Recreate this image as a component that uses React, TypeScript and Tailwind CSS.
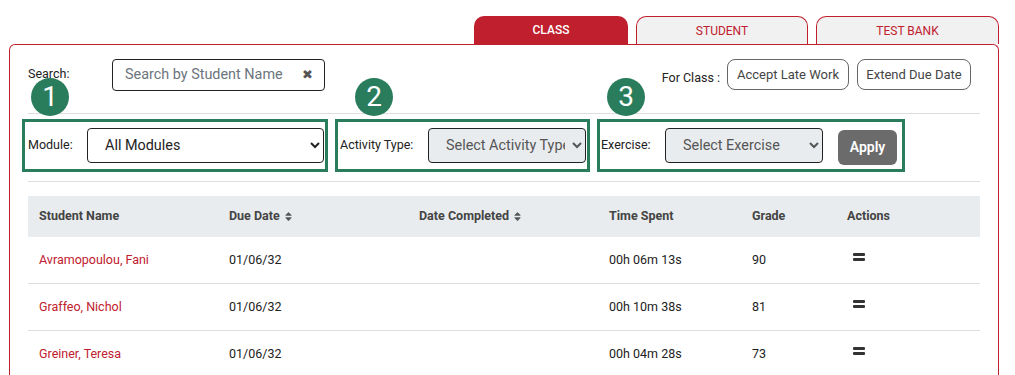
import { FaSort } from "react-icons/fa";

const RED = "text-[#c0202e]";

const rows = [
  { name: "Avramopoulou, Fani", due: "01/06/32", completed: "", time: "00h 06m 13s", grade: "90" },
  { name: "Graffeo, Nichol", due: "01/06/32", completed: "", time: "00h 10m 38s", grade: "81" },
  { name: "Greiner, Teresa", due: "01/06/32", completed: "", time: "00h 04m 28s", grade: "73" },
];

function Badge({ n, className }: { n: number; className: string }) {
  return (
    <div
      className={
        "absolute w-[38px] h-[38px] rounded-full bg-[#2a7d5c] text-white text-[28px] leading-none flex items-center justify-center z-10 " +
        className
      }
    >
      {n}
    </div>
  );
}

function Hamburger() {
  return (
    <div className="flex flex-col gap-[2px] w-[12px] -mt-[6px] ml-[6px]">
      <div className="h-[3px] bg-[#333] rounded-[1px]" />
      <div className="h-[3px] bg-[#333] rounded-[1px]" />
    </div>
  );
}

export default function App() {
  return (
    <div className="w-[1015px] h-[375px] overflow-hidden bg-white font-['Roboto',sans-serif] text-[#222]">
      <div className="pt-4 pl-[9px] pr-[16px]">
        {/* tabs */}
        <div className="flex justify-end gap-2 h-[28px]">
          <div className="w-[154px] rounded-t-[10px] bg-[#c0202e] text-white text-[12px] font-medium flex items-center justify-center">
            CLASS
          </div>
          <div className={"w-[172px] rounded-t-[10px] bg-[#f1f1f1] border border-b-0 border-[#c0202e] text-[12px] flex items-center justify-center " + RED}>
            STUDENT
          </div>
          <div className={"w-[183px] rounded-t-[10px] bg-[#f1f1f1] border border-b-0 border-[#c0202e] text-[12px] flex items-center justify-center " + RED}>
            TEST BANK
          </div>
        </div>

        {/* panel */}
        <div className="border border-b-0 border-[#c0202e] rounded-t-[6px] h-[340px] px-[18px] pt-[14px]">
          {/* search row */}
          <div className="flex items-center h-[32px]">
            <span className="w-[84px] text-[12.5px] -mt-[2px]">Search:</span>
            <div className="w-[213px] h-[32px] border border-[#222] rounded-[4px] flex items-center pl-[12px] pr-[11px]">
              <span className="flex-1 text-[14.4px] text-[#6c757d]">Search by Student Name</span>
              <span className="text-[13px] text-[#555] font-['DejaVu_Sans',sans-serif]">✖</span>
            </div>
            <div className="flex-1" />
            <span className="text-[12.5px] mt-[6px] mr-[7px]">For Class :</span>
            <button className="h-[31px] w-[122px] border border-[#666] rounded-[8px] text-[13px] text-[#444] -mt-[1px]">
              Accept Late Work
            </button>
            <button className="h-[31px] w-[114px] ml-2 mr-[9px] border border-[#666] rounded-[8px] text-[13px] text-[#444] -mt-[1px]">
              Extend Due Date
            </button>
          </div>

          <div className="mt-[22px] border-t border-[#ddd]" />

          {/* filters */}
          <div className="flex gap-[7px] -ml-[6px] mt-[5px]">
            <div className="relative w-[306px] h-[53px] border-[3px] border-[#2a7d5c] flex items-center pl-[3px] pr-[1px]">
              <Badge n={1} className="left-[6px] -top-[44px]" />
              <span className="w-[59px] text-[12.5px]">Module:</span>
              <select className="w-[237px] h-[35px] border border-[#222] rounded-[4px] bg-white text-[14.4px] pl-[13px] text-[#222]">
                <option>All Modules</option>
              </select>
            </div>
            <div className="relative w-[255px] h-[53px] border-[3px] border-[#2a7d5c] flex items-center pl-[2px] pr-[1px]">
              <Badge n={2} className="left-[17px] -top-[44px]" />
              <span className="w-[88px] text-[12.5px]">Activity Type:</span>
              <select className="w-[158px] h-[35px] border border-[#222] rounded-[4px] bg-[#e9ecef] text-[14.4px] pl-[13px] pr-[4px] text-[#555]">
                <option>Select Activity Type</option>
              </select>
            </div>
            <div className="relative w-[308px] h-[53px] border-[3px] border-[#2a7d5c] flex items-center pl-[1px]">
              <Badge n={3} className="left-[7px] -top-[44px]" />
              <span className="w-[64px] text-[12.5px]">Exercise:</span>
              <select className="w-[158px] h-[35px] border border-[#222] rounded-[4px] bg-[#e9ecef] text-[14.4px] pl-[13px] text-[#555]">
                <option>Select Exercise</option>
              </select>
              <button className="ml-[15px] mt-[4px] w-[59px] h-[35px] rounded-[6px] bg-[#6b6b6b] text-white text-[14px] font-semibold">
                Apply
              </button>
            </div>
          </div>

          <div className="mt-[9px] border-t border-[#ddd]" />

          {/* table */}
          <div className="mt-[14px] w-[952px] text-[12.5px]">
            <div className="flex items-center h-[41px] bg-[#e9ecef] px-[11px] font-bold text-[#444]">
              <div className="w-[190px]">Student Name</div>
              <div className="w-[190px] flex items-center gap-[3px]">
                Due Date <FaSort className="text-[11px] text-[#555]" />
              </div>
              <div className="w-[190px] flex items-center gap-[3px]">
                Date Completed <FaSort className="text-[11px] text-[#555]" />
              </div>
              <div className="w-[143px]">Time Spent</div>
              <div className="w-[95px]">Grade</div>
              <div className="flex-1">Actions</div>
            </div>
            {rows.map((r) => (
              <div key={r.name} className="flex items-center h-[47px] px-[11px] border-b border-[#ddd]">
                <div className={"w-[190px] " + RED}>{r.name}</div>
                <div className="w-[190px]">{r.due}</div>
                <div className="w-[190px]">{r.completed}</div>
                <div className="w-[143px]">{r.time}</div>
                <div className="w-[95px]">{r.grade}</div>
                <div className="flex-1">
                  <Hamburger />
                </div>
              </div>
            ))}
          </div>
        </div>
      </div>
    </div>
  );
}
